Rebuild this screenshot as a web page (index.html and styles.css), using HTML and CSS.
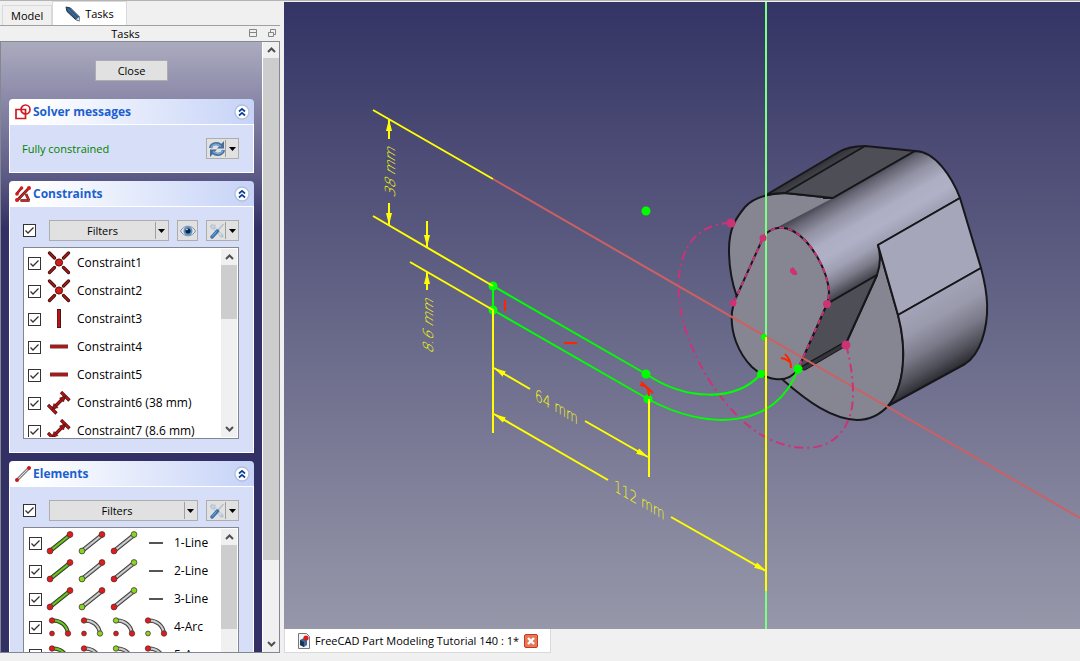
FILE: index.html
```html
<!DOCTYPE html>
<html lang="en">
<head>
<meta charset="utf-8">
<title>FreeCAD</title>
<link rel="stylesheet" href="styles.css">
</head>
<body>
<svg class="defs" aria-hidden="true">
  <symbol id="chevrons" viewBox="0 0 16 16"><circle cx="8" cy="8" r="7" fill="#fff" stroke="#b4bfdc" stroke-width="1.4"/><path d="M5 7.5 8 4.8l3 2.7M5 11.5l3-2.7 3 2.7" fill="none" stroke="#0c3f9f" stroke-width="1.7"/></symbol>
  <symbol id="up" viewBox="0 0 9 6"><path d="M1 5 4.500 1.500 8 5" fill="none" stroke="#505050" stroke-width="2"/></symbol>
  <symbol id="down" viewBox="0 0 9 6"><path d="M1 1l3.500 3.500L8 1" fill="none" stroke="#505050" stroke-width="2"/></symbol>
  <symbol id="caret" viewBox="0 0 7 4"><path d="M0 0h7L3.500 4z"/></symbol>
  <symbol id="tools" viewBox="0 0 16 16"><path d="M3 3 13 13" stroke="#aebccb" stroke-width="3" stroke-linecap="round"/><path d="M3 3 13 13" stroke="#dbe3ea" stroke-width="1.500"/><path d="M1 4 4 1M2 5.500l3.500-.5.5-3.500M11 14l3-3" stroke="#b9c8d6" stroke-width="1.500" fill="none"/><path d="M14.500 1 8 8.500" stroke="#b5c2cc" stroke-width="1.600"/><path d="M8.500 8 3 14" stroke="#3d74b0" stroke-width="3.400" stroke-linecap="round"/><path d="M7.500 8.500 3 13.500" stroke="#83acd4" stroke-width="1"/></symbol>
  <symbol id="coincident" viewBox="0 0 24 24"><path d="M2.500 2l5 5M21.500 2l-5 5M2.500 21.500l5-5M21.500 21.500l-5-5" stroke="#33100f" stroke-width="3.200" stroke-linecap="round"/><path d="M2.500 2l5 5M21.500 2l-5 5M2.500 21.500l5-5M21.500 21.500l-5-5" stroke="#b81414" stroke-width="1.700" stroke-linecap="round"/><circle cx="12" cy="11.500" r="3.600" fill="#d51a1a" stroke="#5d0b0b"/></symbol>
  <symbol id="vertical" viewBox="0 0 24 24"><path d="M12 2v19" stroke="#4b1515" stroke-width="4"/><path d="M11.800 3v17" stroke="#b81414" stroke-width="2.400"/></symbol>
  <symbol id="horizontal" viewBox="0 0 24 24"><path d="M3 11.500h18" stroke="#6b3535" stroke-width="4"/><path d="M3 11.500h18" stroke="#b81414" stroke-width="2.200"/></symbol>
  <symbol id="distance" viewBox="0 0 24 24"><g fill="none" stroke="#4b1010" stroke-width="3.200"><path d="M14 1l8.500 8.500M1 14l8.500 8.500M6 17.500 17.500 6"/></g><g fill="none" stroke="#b81414" stroke-width="1.800"><path d="M14.500 1.500l7.500 7.500M1.500 14.500l7.500 7.500M6 17.500 17.500 6"/></g><path d="M18.500 5l-6 2 4 4zM5 18.500l2-6 4 4z" fill="#a31212" stroke="#4b1010" stroke-width=".6"/></symbol>
  <symbol id="line" viewBox="0 0 28 24"><path d="M4 20 24 4" stroke="#353535" stroke-width="4.200"/><path d="M4 20 24 4" stroke="var(--edge)" stroke-width="2.600"/><path d="M4 20 24 4" stroke="var(--shine)" stroke-width=".8"/><circle cx="4" cy="20" r="2.900" fill="var(--a)" stroke="#5a3030" stroke-width=".8"/><circle cx="24" cy="3.500" r="2.900" fill="var(--b)" stroke="#5a3030" stroke-width=".8"/></symbol>
  <symbol id="arc" viewBox="0 0 28 24"><path d="M6 5.500C14 5 21 10 22 18.500" stroke="#353535" stroke-width="4" fill="none"/><path d="M6 5.500C14 5 21 10 22 18.500" stroke="var(--edge)" stroke-width="2.500" fill="none"/><path d="M6 5.500C14 5 21 10 22 18.500" stroke="var(--shine)" stroke-width=".8" fill="none"/><g stroke="#5a3030" stroke-width=".8"><circle cx="6" cy="5.500" r="2.700" fill="var(--a)"/><circle cx="22" cy="18.500" r="2.700" fill="var(--b)"/><circle cx="6" cy="18.500" r="2.400" fill="var(--c)"/></g></symbol>
</svg>

<div class="window">
  <aside class="sidebar">
    <nav class="tabs">
      <button class="tab" type="button">Model</button>
      <button class="tab active" type="button"><svg width="16" height="16" viewBox="0 0 16 16"><path d="M1 1l4.500 1L14 10.500 14.500 15 10.500 13.500 2 5.500z" fill="#315a80" stroke="#20384f"/><path d="M3 3l8.500 8.500M5.500 2.500 13 10" stroke="#4a7294"/><path d="M11 13.500 14 11l.8 4z" fill="#d5dce2"/></svg>Tasks</button>
    </nav>
    <header class="dock-title">
      <span>Tasks</span>
      <svg width="9" height="9" viewBox="0 0 9 9" fill="none" stroke="#858585"><path d="M.5.5h7v7h-7zM.5 3.500h7"/></svg>
      <svg width="9" height="9" viewBox="0 0 9 9" fill="none" stroke="#858585"><path d="M.5 3.500h5v4h-5zM2.500 3.500v-3h5v5h-2"/></svg>
    </header>

    <div class="panel">
      <div class="panel-content">
        <button class="button close" type="button">Close</button>

        <section class="group">
          <h2 class="group-head"><svg width="16" height="16" viewBox="0 0 16 16" fill="none" stroke="#cc1c22" stroke-width="1.700"><path d="M1 5.500h9.500v9H1z"/><circle cx="10.500" cy="5.500" r="4.500"/></svg><span>Solver messages</span><svg class="fold"><use href="#chevrons"/></svg></h2>
          <div class="group-body solver">
            <span class="status">Fully constrained</span>
            <button class="button split" type="button" aria-label="Update"><svg width="16" height="16" viewBox="0 0 16 16"><g fill="none" stroke="#466e9a" stroke-width="3.200"><path d="M1.500 7C2.500 2.500 8 1 12 4.500M14.500 9c-1 4.500-6.500 6-10.500 2.500"/></g><path d="M15 0v7.500H8zM1 16V8.500h7z" fill="#466e9a"/><path d="M2 6.500C3.500 3 8 2 12 5.500M14 9.500c-1.500 3.500-6 4.500-10 1" fill="none" stroke="#79a8d6" stroke-width="1.600"/></svg><span class="drop"><svg width="7" height="4"><use href="#caret"/></svg></span></button>
          </div>
        </section>

        <section class="group">
          <h2 class="group-head"><svg width="16" height="16" viewBox="0 0 16 16"><path d="M1.500 8 6.500 2M2 14.500 14 2M5.500 14.500h9M14 14.500 11 8" stroke="#4b1010" stroke-width="2.600"/><path d="M1.500 8 6.500 2M2 14.500 14 2M5.500 14.500h9M14 14.500 11 8" stroke="#cf2525" stroke-width="1.600"/><g fill="#d51a1a"><circle cx="2" cy="8" r="1.800"/><circle cx="6.500" cy="2" r="1.800"/><circle cx="14" cy="2" r="2"/><circle cx="2" cy="14" r="2"/></g></svg><span>Constraints</span><svg class="fold"><use href="#chevrons"/></svg></h2>
          <div class="group-body">
            <div class="toolbar">
              <input class="check" type="checkbox" checked aria-label="All constraints">
              <button class="button filter" type="button"><span>Filters</span><span class="drop"><svg width="7" height="4"><use href="#caret"/></svg></span></button>
              <button class="button eye" type="button" aria-label="Show constraints"><svg width="16" height="12" viewBox="0 0 16 12"><path d="M.5 6C4-.5 12-.5 15.500 6 12 12.500 4 12.500.5 6z" fill="#dfe8ef" stroke="#8195a5"/><circle cx="8" cy="6" r="4.500" fill="#5b8fc4"/><circle cx="8" cy="6" r="2.500" fill="#0c2440"/><circle cx="7" cy="4.500" r=".8" fill="#fff"/></svg></button>
              <button class="button split" type="button" aria-label="Settings"><svg width="16" height="16"><use href="#tools"/></svg><span class="drop"><svg width="7" height="4"><use href="#caret"/></svg></span></button>
            </div>
            <div class="list">
              <ul class="rows">
                <li><label><input class="check" type="checkbox" checked><svg class="icon"><use href="#coincident"/></svg>Constraint1</label></li>
                <li><label><input class="check" type="checkbox" checked><svg class="icon"><use href="#coincident"/></svg>Constraint2</label></li>
                <li><label><input class="check" type="checkbox" checked><svg class="icon"><use href="#vertical"/></svg>Constraint3</label></li>
                <li><label><input class="check" type="checkbox" checked><svg class="icon"><use href="#horizontal"/></svg>Constraint4</label></li>
                <li><label><input class="check" type="checkbox" checked><svg class="icon"><use href="#horizontal"/></svg>Constraint5</label></li>
                <li><label><input class="check" type="checkbox" checked><svg class="icon"><use href="#distance"/></svg>Constraint6 (38 mm)</label></li>
                <li><label><input class="check" type="checkbox" checked><svg class="icon"><use href="#distance"/></svg>Constraint7 (8.6 mm)</label></li>
              </ul>
              <div class="scroll"><svg class="arrow"><use href="#up"/></svg><div class="track"><div class="thumb short"></div></div><svg class="arrow"><use href="#down"/></svg></div>
            </div>
          </div>
        </section>

        <section class="group">
          <h2 class="group-head"><svg width="16" height="16" viewBox="0 0 16 16"><path d="M2 14 14 2" stroke="#444" stroke-width="2.600"/><path d="M2 14 14 2" stroke="#ddd" stroke-width="1.200"/><circle cx="2" cy="14" r="2" fill="#c81818"/><circle cx="14" cy="2" r="2" fill="#c81818"/></svg><span>Elements</span><svg class="fold"><use href="#chevrons"/></svg></h2>
          <div class="group-body">
            <div class="toolbar">
              <input class="check" type="checkbox" checked aria-label="All elements">
              <button class="button filter" type="button"><span>Filters</span><span class="drop"><svg width="7" height="4"><use href="#caret"/></svg></span></button>
              <button class="button split" type="button" aria-label="Settings"><svg width="16" height="16"><use href="#tools"/></svg><span class="drop"><svg width="7" height="4"><use href="#caret"/></svg></span></button>
            </div>
            <div class="list">
              <ul class="rows elements">
                <li><label><input class="check" type="checkbox" checked><svg class="geo on"><use href="#line"/></svg><svg class="geo start"><use href="#line"/></svg><svg class="geo end"><use href="#line"/></svg><span class="dash"></span>1-Line</label></li>
                <li><label><input class="check" type="checkbox" checked><svg class="geo on"><use href="#line"/></svg><svg class="geo start"><use href="#line"/></svg><svg class="geo end"><use href="#line"/></svg><span class="dash"></span>2-Line</label></li>
                <li><label><input class="check" type="checkbox" checked><svg class="geo on"><use href="#line"/></svg><svg class="geo start"><use href="#line"/></svg><svg class="geo end"><use href="#line"/></svg><span class="dash"></span>3-Line</label></li>
                <li><label><input class="check" type="checkbox" checked><svg class="geo on"><use href="#arc"/></svg><svg class="geo end"><use href="#arc"/></svg><svg class="geo start"><use href="#arc"/></svg><svg class="geo mid"><use href="#arc"/></svg>4-Arc</label></li>
                <li><label><input class="check" type="checkbox" checked><svg class="geo on"><use href="#arc"/></svg><svg class="geo end"><use href="#arc"/></svg><svg class="geo start"><use href="#arc"/></svg><svg class="geo mid"><use href="#arc"/></svg>5-Arc</label></li>
              </ul>
              <div class="scroll"><svg class="arrow"><use href="#up"/></svg><div class="track"><div class="thumb tall"></div></div><svg class="arrow"><use href="#down"/></svg></div>
            </div>
          </div>
        </section>
      </div>
      <div class="scroll outer"><svg class="arrow"><use href="#up"/></svg><div class="track"><div class="thumb page"></div></div><svg class="arrow"><use href="#down"/></svg></div>
    </div>
  </aside>

  <main class="workspace">
    <div class="view">
      <svg class="scene" viewBox="284 2 796 627" preserveAspectRatio="xMidYMid slice" role="img" aria-label="3D view">
        <defs>
          <linearGradient id="gBoss" gradientUnits="userSpaceOnUse" x1="778" y1="225" x2="824" y2="305"><stop offset="0" stop-color="#3c3c44"/><stop offset=".1" stop-color="#656574"/><stop offset=".25" stop-color="#9292a4"/><stop offset=".42" stop-color="#adadc3"/><stop offset=".56" stop-color="#b0b0c7"/><stop offset=".72" stop-color="#a0a0b4"/><stop offset=".86" stop-color="#7a7a89"/><stop offset="1" stop-color="#42424a"/></linearGradient>
          <linearGradient id="gLow" gradientUnits="userSpaceOnUse" x1="898" y1="315" x2="935" y2="379"><stop offset="0" stop-color="#a4a4b8"/><stop offset=".3" stop-color="#9a9aad"/><stop offset=".6" stop-color="#797988"/><stop offset=".85" stop-color="#4f4f59"/><stop offset="1" stop-color="#2f2f36"/></linearGradient>
          <linearGradient id="gTop" gradientUnits="userSpaceOnUse" x1="806" y1="170" x2="814" y2="184"><stop offset="0" stop-color="#303036"/><stop offset="1" stop-color="#52525a"/></linearGradient>
          <marker id="head" markerUnits="userSpaceOnUse" markerWidth="13" markerHeight="8" refX="12" refY="4" orient="auto"><path d="M0 1v6L12 4z" fill="#ff0"/></marker>
        </defs>

        <g stroke="#17171b" stroke-width="2" stroke-linejoin="round">
          <path fill="#868692" d="M737 297Q729 275 729 250C729 228 736 218 745 207Q757 194 785 193L833 198 880 245 798 369 760 350z"/>
          <path fill="url(#gTop)" stroke="none" d="M766 195 837 153Q848 146 865 146L785 193z"/>
          <path fill="#4e4e56" d="M785 193 865 146 915 151 833 198z"/>
          <path fill="none" d="M766 195 837 153Q848 146 865 146M766 195Q775 193 785 193"/>
          <path fill="#868692" d="M878 245 898 315C907 349 905 386 888 406Q875 420 857 420C832 419 808 402 783 380L798 369 847 341 877 275z"/>
          <path fill="url(#gBoss)" stroke="none" d="M776 228 833 198 915 151C935 151 952 177 960 198L878 245C881 256 880 267 877 275L827 304C827 260 798 225 776 228z"/>
          <path fill="none" d="M823 198 833 198 915 151C935 151 952 177 960 198L878 245C881 256 880 267 877 275L827 304"/>
          <path fill="#a5a6ba" d="M878 245 960 198 981 268 898 315z"/>
          <path fill="url(#gLow)" d="M898 315 981 268C988 294 990 316 982 340Q976 357 965 364L888 406C905 386 907 349 898 315z"/>
          <path fill="#4e4e56" d="M827 304 877 275 847 341 798 369z"/>
          <path fill="#34343a" stroke-width="1" d="M798 369 847 341 846 346 805 370z"/>
          <path fill="#868692" d="M763 238C768 229 780 224 793 231 812 241 828 272 829 292Q829 298 827 304L798 369C788 384 768 382 752 367 738 353 730 332 732 312L734 302z"/>
        </g>

        <path class="axis-x" d="M493 179 1080 518"/>
        <path class="construction" d="M734 302 763 238C768 229 780 224 793 231 812 241 828 272 829 292Q829 298 827 304L798 369" stroke-dasharray="5 4"/>
        <path class="construction" stroke-dasharray="9 4 2 4" d="M731 223C690 224 676 257 679 298 684 352 724 412 760 434 806 461 852 449 853 395Q853 370 846 345"/>
        <path class="axis-y" d="M766 2v627"/>
        <g fill="#cc3377"><circle cx="731" cy="223" r="4.500"/><circle cx="846" cy="345" r="4.500"/><circle cx="763" cy="238" r="3.500"/><circle cx="733" cy="303" r="3.500"/><circle cx="827" cy="304" r="4"/><path d="M790 269l3-2 4 5v3l-4 0-3-3z"/></g>

        <g class="edges">
          <path d="M493 310v-24L646 374C686 401 736 402 761 374M493 310 648 399C706 431 776 430 798 369"/>
          <circle cx="646" cy="211" r="3.500"/><circle cx="493" cy="286" r="3.500"/><circle cx="493" cy="310" r="3.500"/><circle cx="646" cy="374" r="3.500"/><circle cx="648" cy="399" r="3.500"/><circle cx="761" cy="374" r="3"/><circle cx="798" cy="369" r="3.500"/><circle cx="764" cy="337" r="2"/>
        </g>
        <g class="dims">
          <path d="M373 110 493 179M373 216l120 70M410 262l83 48v123M649 399v78M766 337v254"/>
          <g marker-end="url(#head)"><path d="M389 139v-20"/><path d="M389 203v22"/><path d="M427 221v26"/><path d="M427 290v-18"/><path d="M530 389 494 368"/><path d="M585 421 648 457"/><path d="M608 480 494 414"/><path d="M671 517 766 571"/></g>
        </g>
        <g class="dim-text">
          <text transform="translate(395 198) rotate(-90) skewX(-30)">38 mm</text>
          <text transform="translate(433 354) rotate(-90) skewX(-30)">8.6 mm</text>
          <text transform="translate(535 400) rotate(30) skewX(30)">64 mm</text>
          <text transform="translate(614 491) rotate(30) skewX(30)">112 mm</text>
        </g>
        <g fill="none" stroke="#ff2400" stroke-width="2"><path d="M505 300v11M564 343h13M641 382l12 11M640 385l5 1 3 3 1 7M785 354c3 4 6 6 6 14M781 358l4 1 5 3"/></g>
      </svg>
    </div>
    <footer class="documents">
      <div class="document">
        <svg width="12" height="16" viewBox="0 0 12 16"><path d="M.5.5h8l3 3v12H.5z" fill="#f4f4f4" stroke="#777"/><path d="M2 7l4-2 3 2v5l-3 2-4-2z" fill="#3a6aa0"/><path d="M2 7l4 2v5l-4-2z" fill="#183558"/><circle cx="8" cy="5" r="2.600" fill="#e01b1b"/></svg>
        <span>FreeCAD Part Modeling Tutorial 140 : 1*</span>
        <button class="shut" type="button" aria-label="Close document"><svg width="8" height="8" viewBox="0 0 8 8"><path d="M1 1l6 6M7 1 1 7" stroke="#fff" stroke-width="2.400"/></svg></button>
      </div>
    </footer>
  </main>
</div>
</body>
</html>
```

FILE: styles.css
```css
* { box-sizing: border-box; }
body { margin: 0; background: #f0f0f0; color: #000; font: 11px/16px "Open Sans", sans-serif; }
button { font: inherit; color: inherit; padding: 0; margin: 0; }
svg { flex: none; }
.defs { position: absolute; width: 0; height: 0; }

.window { display: flex; gap: 4px; height: 100vh; padding-bottom: 8px; border-top: 1px solid #b4b4b4; }
.sidebar { flex: none; width: 280px; display: flex; flex-direction: column; }

.tabs { display: flex; align-items: flex-end; height: 25px; padding-left: 2px; border-bottom: 1px solid #a0a0a0; }
.tab { height: 20px; padding: 0 8px; border: 1px solid #d9d9d9; border-bottom: 0; background: #f0f0f0; }
.tab.active { display: flex; align-items: center; gap: 4px; height: 24px; padding: 0 12px; background: #fff; }
.dock-title { display: flex; align-items: center; gap: 10px; height: 15px; padding-right: 3px; }
.dock-title span { flex: 1; text-align: center; padding-left: 12px; }

.panel { flex: 1; min-height: 0; display: flex; overflow: hidden; border: 1px solid #828790; background: #f0f0f0; }
.panel-content { flex: 1; display: flex; flex-direction: column; gap: 8px; padding: 18px 8px 0; overflow: hidden; background: linear-gradient(#ababbf 0, #8f8dab 50px, #5f5d88 130px, #333065 186px); }

.button { display: flex; align-items: center; justify-content: center; flex: none; height: 21px; border: 1px solid #adadad; background: #e1e1e1; }
.close { align-self: center; width: 73px; margin-bottom: 10px; }
.filter { flex: 1; padding-right: 1px; }
.filter > span:first-child { flex: 1; }
.eye { width: 21px; }
.split { width: 33px; padding-left: 2px; }
.drop { flex: 1; display: flex; align-items: center; justify-content: center; align-self: stretch; margin: 1px 0; border-left: 1px solid #a0a0a0; }
.filter .drop { flex: none; width: 12px; }

.group { flex: none; }
.group-head { display: flex; align-items: center; gap: 2px; margin: 0; height: 25px; padding: 0 4px 0 6px; border-radius: 4px 4px 0 0; background: linear-gradient(90deg, #fff 10%, #c6d3f7); color: #1c5fd0; font-size: 12px; font-weight: bold; }
.group-head span { flex: 1; }
.fold { width: 16px; height: 16px; }
.group-body { padding: 13px 14px 13px 13px; border: 1px solid #fff; background: #d6dff7; }
.solver { display: flex; align-items: center; justify-content: space-between; padding-left: 12px; }
.status { color: #008000; }

.toolbar { display: flex; align-items: center; gap: 8px; margin-bottom: 6px; }
.toolbar .check { margin-right: 5px; }
.check { appearance: none; flex: none; width: 13px; height: 13px; margin: 0; border: 1px solid #333; background: #fff url("data:image/svg+xml,%3Csvg xmlns='http://www.w3.org/2000/svg' viewBox='0 0 11 11'%3E%3Cpath d='M1.500 5.500l2.500 2.500 5.500-5.500' fill='none' stroke='%23333' stroke-width='1.300'/%3E%3C/svg%3E"); }

.list { display: flex; height: 192px; padding: 1px; border: 1px solid #828790; background: #fff; font-size: 12px; }
.rows { flex: 1; margin: 0; padding: 0 0 0 3px; list-style: none; overflow: hidden; }
.rows label { display: flex; align-items: center; height: 28px; white-space: nowrap; }
.icon { width: 24px; height: 24px; margin: 0 6px; }
.elements { padding-left: 4px; }
.geo { width: 28px; height: 24px; margin: 0 0 0 4px; --a: #e01b1b; --b: #e01b1b; --c: #e01b1b; --edge: #aaa; --shine: #eee; }
.on { --edge: #55a80f; --shine: #8be03a; }
.start { --a: #7edb22; }
.end { --b: #7edb22; }
.mid { --c: #7edb22; margin-right: 4px; }
.dash { width: 14px; height: 2px; margin: 0 11px; background: #555; }

.scroll { flex: none; display: flex; flex-direction: column; align-items: center; width: 16px; background: #f0f0f0; }
.outer { width: 17px; border-left: 1px solid #fff; }
.arrow { width: 9px; height: 6px; margin: 5px 0; }
.track { flex: 1; align-self: stretch; }
.thumb { background: #cdcdcd; }
.short { height: 54px; }
.tall { height: 84px; }
.page { height: 502px; }

.workspace { flex: 1; min-width: 0; display: flex; flex-direction: column; }
.view { flex: 1; min-height: 0; margin-top: 1px; background: linear-gradient(#343465, #9797aa); }
.scene { display: block; width: 100%; height: 100%; }
.axis-x { stroke: #cc6063; stroke-width: 2; fill: none; }
.axis-y { stroke: #7dff83; stroke-width: 2; fill: none; }
.construction { stroke: #cc3377; stroke-width: 2; fill: none; }
.edges path { fill: none; stroke: #0f0; stroke-width: 2; }
.edges circle { fill: #0f0; stroke: #0f0; stroke-width: 2; }
.dims { fill: none; stroke: #ff0; stroke-width: 2; }
.dim-text { font-family: "DejaVu Sans", sans-serif; font-weight: 200; font-size: 14px; fill: #ff0; }

.documents { display: flex; height: 24px; }
.document { display: flex; align-items: center; gap: 5px; padding: 0 12px 0 13px; background: #fff; border: 1px solid #d9d9d9; border-top: 0; }
.shut { display: flex; align-items: center; justify-content: center; width: 14px; height: 14px; border: 1px solid #d0341c; border-radius: 2px; background: #e07a58; }
```
